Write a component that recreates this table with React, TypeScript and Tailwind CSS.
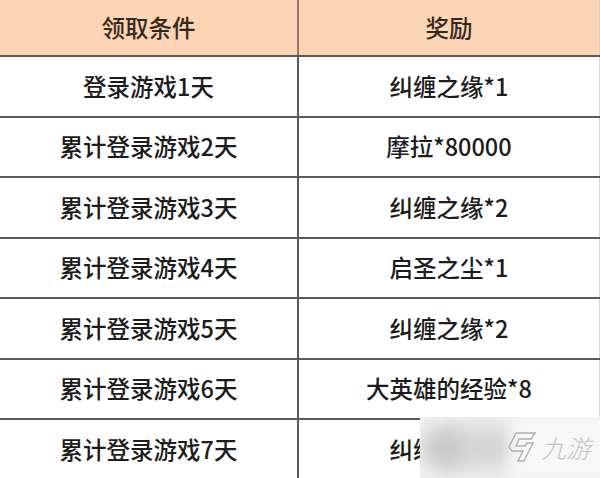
const rows = [
  ["登录游戏1天", "纠缠之缘*1"],
  ["累计登录游戏2天", "摩拉*80000"],
  ["累计登录游戏3天", "纠缠之缘*2"],
  ["累计登录游戏4天", "启圣之尘*1"],
  ["累计登录游戏5天", "纠缠之缘*2"],
  ["累计登录游戏6天", "大英雄的经验*8"],
  ["累计登录游戏7天", "纠缠之缘*1"],
];

export default function App() {
  return (
    <div
      className="relative h-[478px] w-[600px] overflow-hidden bg-white text-[23.5px] font-medium text-[#1c1c1c]"
      style={{ fontFamily: '"Noto Sans CJK SC", "Liberation Sans", sans-serif' }}
    >
      <div className="grid h-[57px] grid-cols-[299px_1fr] border-b-2 border-[#5a5a5a] bg-[#fcd5b4] text-[#35281c]">
        <div className="flex items-center justify-center border-r-2 border-[#8a7a6a]">领取条件</div>
        <div className="flex items-center justify-center border-r border-[#e8c8ac]">奖励</div>
      </div>
      {rows.map(([cond, reward], i) => (
        <div
          key={i}
          className="grid h-[60.5px] grid-cols-[299px_1fr] border-b-2 border-[#5a5a5a]"
        >
          <div className="flex items-center justify-center border-r-2 border-[#5a5a5a]">{cond}</div>
          <div className="flex items-center justify-center border-r border-[#d8d8d8]">{reward}</div>
        </div>
      ))}

      {/* watermark */}
      <div className="absolute bottom-0 right-0 h-[61px] w-[180px] overflow-hidden bg-[#f2f2f2]">
        <div className="absolute left-[2px] top-[8px] h-[46px] w-[50px] rounded-full bg-[#c8c8c8] blur-[10px]" />
        <div className="absolute left-[40px] top-[10px] h-[40px] w-[60px] rounded-full bg-[#d0d0d0] blur-[12px]" />
        <div className="absolute inset-y-0 right-[-10px] w-[100px] bg-[#f8f8f8] blur-[8px]" />
        <div className="absolute left-[86px] top-[12px] flex items-center gap-[3px] whitespace-nowrap">
          <svg width="32" height="36" viewBox="0 0 32 34" fill="none" stroke="#b0b0b0" strokeWidth="1.4">
            <path d="M10 3 L29 3 L25 9 L13 9 L10 16 L19 16 L21 13 L27 13 L18 31 L12 31 L17 21 L6 21 L3 17 Z" />
          </svg>
          <span
            className="text-[25px] font-light italic leading-none text-[#c2c2c2]"
            style={{ fontFamily: '"Noto Sans CJK SC", sans-serif' }}
          >
            九游
          </span>
        </div>
      </div>
    </div>
  );
}
